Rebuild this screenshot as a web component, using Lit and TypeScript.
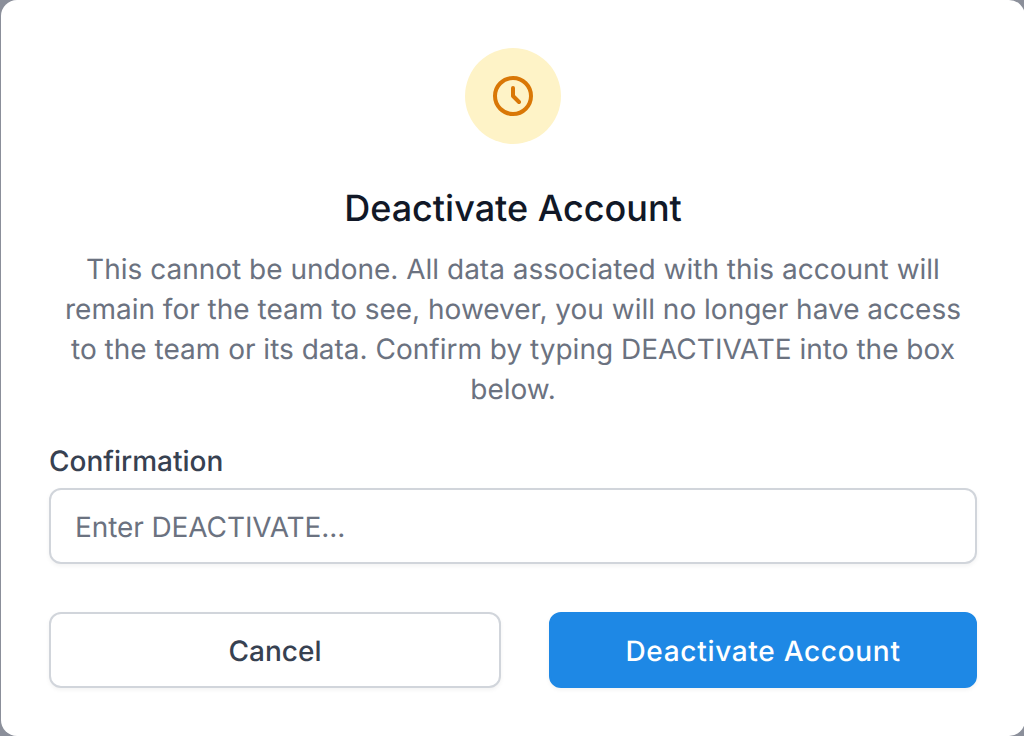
import { LitElement, html, css } from "lit";
import { customElement } from "lit/decorators.js";

@customElement("app-root")
export class AppRoot extends LitElement {
  static styles = css`
    :host {
      display: block;
      box-sizing: border-box;
      width: 1024px;
      height: 736px;
      padding-left: 1px;
      overflow: hidden;
      background: #8b8f9a;
      font-family: Inter, "Liberation Sans", sans-serif;
      text-rendering: geometricPrecision;
      -webkit-font-smoothing: antialiased;
    }
    * { box-sizing: border-box; }
    .dialog {
      display: flex;
      flex-direction: column;
      width: 1024px;
      height: 736px;
      padding: 48px;
      border-radius: 16px;
      background: #fff;
    }
    .badge {
      display: flex;
      align-items: center;
      justify-content: center;
      align-self: center;
      width: 96px;
      height: 96px;
      border-radius: 50%;
      background: #fef3c7;
      color: #d97706;
    }
    .badge svg { width: 48px; height: 48px; }
    .title {
      margin: 40px 0 0;
      font-size: 36px;
      line-height: 48px;
      font-weight: 500;
      text-align: center;
      color: #111827;
    }
    .message {
      margin: 17px 0 0;
      font-size: 28px;
      line-height: 40px;
      text-align: center;
      color: #6b7280;
    }
    .label {
      margin-top: 32px;
      font-size: 28px;
      line-height: 40px;
      font-weight: 500;
      color: #374151;
    }
    .field {
      width: 928px;
      height: 76px;
      margin: 7px 0 0;
      padding: 2px 24px 0;
      border: 2px solid #d1d5db;
      border-radius: 12px;
      background: #fff;
      box-shadow: 0 2px 4px rgba(0, 0, 0, 0.05);
      font: 400 28px/40px Inter, "Liberation Sans", sans-serif;
      letter-spacing: -0.09px;
      text-rendering: inherit;
      color: #111827;
    }
    .field::placeholder { color: #6b7280; opacity: 1; }
    .actions {
      display: grid;
      grid-template-columns: 452px 428px;
      gap: 48px;
      margin-top: 48px;
    }
    .button {
      height: 76px;
      padding: 2px 0 0;
      border: 2px solid #d1d5db;
      border-radius: 12px;
      background: #fff;
      box-shadow: 0 2px 4px rgba(0, 0, 0, 0.05);
      font: 500 28px/40px Inter, "Liberation Sans", sans-serif;
      text-rendering: inherit;
      color: #374151;
    }
    .primary {
      border-color: #1e88e5;
      background: #1e88e5;
      letter-spacing: 0.7px;
      color: #fff;
    }
  `;

  render() {
    return html`
      <div class="dialog" role="dialog" aria-labelledby="title">
        <div class="badge">
          <svg viewBox="0 0 24 24" fill="none" stroke="currentColor" stroke-width="2" stroke-linecap="round" stroke-linejoin="round">
            <path d="M12 8v4l3 3m6-3a9 9 0 11-18 0 9 9 0 0118 0z" />
          </svg>
        </div>
        <h3 class="title" id="title">Deactivate Account</h3>
        <p class="message">This cannot be undone. All data associated with this account will remain for the team to see, however, you will no longer have access to the team or its data. Confirm by typing DEACTIVATE into the box below.</p>
        <label class="label" for="confirmation">Confirmation</label>
        <input class="field" id="confirmation" type="text" placeholder="Enter DEACTIVATE..." />
        <div class="actions">
          <button type="button" class="button">Cancel</button>
          <button type="button" class="button primary">Deactivate Account</button>
        </div>
      </div>
    `;
  }
}
